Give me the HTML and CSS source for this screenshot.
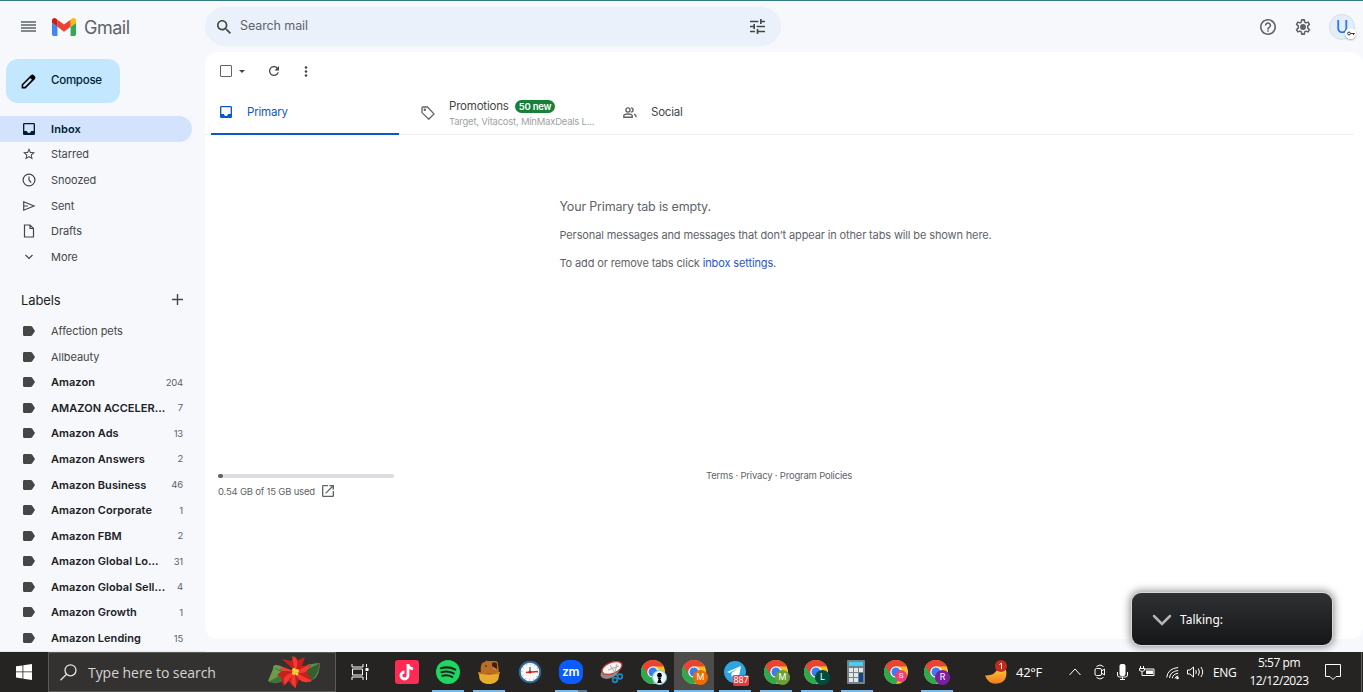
FILE: index.html
```html
<!DOCTYPE html>
<html lang="en">
<head>
  <meta charset="UTF-8">
  <meta name="viewport" content="width=device-width, initial-scale=1.0">
  <title>Inbox - Gmail</title>
  <link rel="stylesheet" href="styles.css">
</head>
<body>
  <!-- Shared icons -->
  <svg class="defs" width="0" height="0">
    <symbol id="label" viewBox="0 0 12 10"><path d="M1.5 0h6.4c.6 0 1 .2 1.3.7L12 5 9.2 9.3c-.3.5-.7.7-1.3.7H1.5C.6 10 0 9.400 0 8.500v-7C0 .6.600 0 1.500 0z"/></symbol>
    <symbol id="inbox" viewBox="3 3 18 18"><path d="M19 3H5c-1.100 0-2 .9-2 2v14c0 1.100.9 2 2 2h14c1.100 0 2-.9 2-2V5c0-1.100-.9-2-2-2zm0 12h-4c0 1.660-1.340 3-3 3s-3-1.340-3-3H5V5h14v10z"/></symbol>
    <symbol id="chrome" viewBox="0 0 48 48">
      <circle cx="24" cy="24" r="24" fill="#fbc116"/>
      <path d="M24 24 3.200 12A24 24 0 0 0 24 48l10.400-18z" fill="#2da94f"/>
      <path d="M24 24V13h21.200A24 24 0 0 0 3.200 12l10.400 18z" fill="#ea4335"/>
      <circle cx="24" cy="24" r="11.500" fill="#fff"/>
      <circle cx="24" cy="24" r="9" fill="#3a7df0"/>
    </symbol>
  </svg>

  <div class="app">
    <aside class="sidebar">
      <div class="brand">
        <svg class="menu-icon" viewBox="0 0 15 11"><path d="M0 1h15M0 4h15M0 7h15M0 10h15"/></svg>
        <svg class="gmail-logo" viewBox="52 42 88 66">
          <path fill="#4285f4" d="M58 108h14V74L52 59v43c0 3.320 2.690 6 6 6"/>
          <path fill="#34a853" d="M120 108h14c3.320 0 6-2.690 6-6V59l-20 15"/>
          <path fill="#fbbc04" d="M120 48v26l20-15v-8c0-7.420-8.470-11.650-14.400-7.200"/>
          <path fill="#ea4335" d="M72 74V48l24 18 24-18v26L96 92"/>
          <path fill="#c5221f" d="M52 51v8l20 15V48l-5.600-4.200c-5.940-4.450-14.400-.22-14.400 7.200"/>
        </svg>
        <span class="wordmark">Gmail</span>
      </div>

      <button class="compose">
        <svg viewBox="0 0 16 16"><path d="M1.500 14.500v-3L11 2l3 3-9.500 9.500z" fill="none" stroke="#000" stroke-width="1.700"/><path d="M9 3.500 11.500 1c.6-.6 1.200-.6 1.800 0L15 2.700c.6.6.6 1.200 0 1.800L12.500 7z"/></svg>
        <span>Compose</span>
      </button>

      <nav class="folders">
        <a class="row active"><svg class="ico"><use href="#inbox"/></svg><span class="name">Inbox</span></a>
        <a class="row"><svg class="ico" viewBox="2 2 20 20"><path d="M22 9.240l-7.190-.62L12 2 9.190 8.630 2 9.240l5.460 4.730L5.820 21 12 17.270 18.180 21l-1.630-7.030L22 9.240zM12 15.400l-3.760 2.270 1-4.280-3.320-2.880 4.380-.38L12 6.100l1.710 4.040 4.380.38-3.320 2.880 1 4.280L12 15.400z"/></svg><span class="name">Starred</span></a>
        <a class="row"><svg class="ico line" viewBox="0 0 12 12"><circle cx="6" cy="6" r="5.900"/><path d="M6 2.500V6l2.200 2.600"/></svg><span class="name">Snoozed</span></a>
        <a class="row"><svg class="ico line" viewBox="0 0 12 12"><path d="M.7 1.800 11 6 .7 10.200zM.7 6H5"/></svg><span class="name">Sent</span></a>
        <a class="row"><svg class="ico line" viewBox="0 0 12 12"><path d="M2.500 0H7l3.500 3.500V12h-9V0zM7 0v3.500h3.500"/></svg><span class="name">Drafts</span></a>
        <a class="row"><svg class="ico line" viewBox="0 0 12 12"><path d="m2.500 4 3.500 3.500L9.500 4"/></svg><span class="name">More</span></a>
      </nav>

      <div class="labels-head">
        <span>Labels</span>
        <svg viewBox="0 0 11 11"><path d="M5.500 0v11M0 5.500h11"/></svg>
      </div>

      <nav class="labels">
        <a class="row"><svg class="tag"><use href="#label"/></svg><span class="name">Affection pets</span></a>
        <a class="row"><svg class="tag"><use href="#label"/></svg><span class="name">Allbeauty</span></a>
        <a class="row unread"><svg class="tag"><use href="#label"/></svg><span class="name">Amazon</span><span class="count">204</span></a>
        <a class="row unread"><svg class="tag"><use href="#label"/></svg><span class="name">AMAZON ACCELER...</span><span class="count">7</span></a>
        <a class="row unread"><svg class="tag"><use href="#label"/></svg><span class="name">Amazon Ads</span><span class="count">13</span></a>
        <a class="row unread"><svg class="tag"><use href="#label"/></svg><span class="name">Amazon Answers</span><span class="count">2</span></a>
        <a class="row unread"><svg class="tag"><use href="#label"/></svg><span class="name">Amazon Business</span><span class="count">46</span></a>
        <a class="row unread"><svg class="tag"><use href="#label"/></svg><span class="name">Amazon Corporate</span><span class="count">1</span></a>
        <a class="row unread"><svg class="tag"><use href="#label"/></svg><span class="name">Amazon FBM</span><span class="count">2</span></a>
        <a class="row unread"><svg class="tag"><use href="#label"/></svg><span class="name">Amazon Global Lo...</span><span class="count">31</span></a>
        <a class="row unread"><svg class="tag"><use href="#label"/></svg><span class="name">Amazon Global Sell...</span><span class="count">4</span></a>
        <a class="row unread"><svg class="tag"><use href="#label"/></svg><span class="name">Amazon Growth</span><span class="count">1</span></a>
        <a class="row unread"><svg class="tag"><use href="#label"/></svg><span class="name">Amazon Lending</span><span class="count">15</span></a>
      </nav>
    </aside>

    <div class="content">
      <header class="topbar">
        <div class="search">
          <svg class="search-icon" viewBox="3 3 17.500 17.500"><path d="M15.500 14h-.79l-.28-.27C15.410 12.590 16 11.110 16 9.500 16 5.910 13.090 3 9.500 3S3 5.910 3 9.500 5.910 16 9.500 16c1.610 0 3.090-.59 4.230-1.570l.27.28v.79l5 4.990L20.490 19l-4.990-5zm-6 0C7.010 14 5 11.990 5 9.500S7.010 5 9.500 5 14 7.010 14 9.500 11.990 14 9.500 14z"/></svg>
          <span class="search-text">Search mail</span>
          <svg class="tune-icon" viewBox="3 3 18 18"><path d="M3 17v2h6v-2H3zM3 5v2h10V5H3zm10 16v-2h8v-2h-8v-2h-2v6h2zM7 9v2H3v2h4v2h2V9H7zm14 4v-2H11v2h10zm-6-4h2V7h4V5h-4V3h-2v6z"/></svg>
        </div>
        <div class="top-actions">
          <svg class="act" viewBox="2 2 20 20"><path d="M11 18h2v-2h-2v2zm1-16C6.480 2 2 6.480 2 12s4.480 10 10 10 10-4.480 10-10S17.520 2 12 2zm0 18c-4.410 0-8-3.590-8-8s3.590-8 8-8 8 3.590 8 8-3.590 8-8 8zm0-14c-2.210 0-4 1.790-4 4h2c0-1.100.9-2 2-2s2 .9 2 2c0 2-3 1.750-3 5h2c0-2.250 3-2.500 3-5 0-2.210-1.790-4-4-4z"/></svg>
          <svg class="act" viewBox="1.700 1.700 20.600 20.600"><path d="M10.300 2.800h3.400l.5 2.900 1.700 1 2.700-1 1.700 2.900-2.200 1.900v3l2.200 1.900-1.700 2.900-2.700-1-1.700 1-.5 2.900h-3.400l-.5-2.900-1.700-1-2.700 1-1.700-2.900 2.200-1.900v-3L3.700 8.600l1.700-2.900 2.700 1 1.700-1z" fill="none" stroke="#5f6368" stroke-width="2" stroke-linejoin="round"/><circle cx="12" cy="12" r="3.800"/></svg>
          <div class="avatar">U
            <span class="key"><svg viewBox="0 0 8 5"><circle cx="2" cy="2.500" r="1.400"/><path d="M3.500 2.500h4.200M6.500 2.500v1.600"/></svg></span>
          </div>
        </div>
      </header>

      <main class="panel">
        <div class="toolbar">
          <span class="checkbox"></span>
          <span class="caret"></span>
          <svg class="refresh" viewBox="4 4 16 16"><path d="M17.650 6.350C16.200 4.900 14.210 4 12 4c-4.420 0-7.990 3.580-7.990 8s3.570 8 7.990 8c3.730 0 6.840-2.550 7.730-6h-2.080c-.82 2.330-3.040 4-5.650 4-3.310 0-6-2.690-6-6s2.690-6 6-6c1.660 0 3.140.69 4.220 1.780L13 11h7V4l-2.350 2.350z"/></svg>
          <svg class="dots" viewBox="0 0 4 11"><circle cx="2" cy="1.500" r="1.300"/><circle cx="2" cy="5.500" r="1.300"/><circle cx="2" cy="9.500" r="1.300"/></svg>
        </div>

        <div class="tabs">
          <div class="tab primary">
            <svg class="ico"><use href="#inbox"/></svg>
            <span class="tab-name">Primary</span>
          </div>
          <div class="tab promotions">
            <svg class="promo-icon" viewBox="0 0 14 14"><path d="M1 2v4.600L7.700 13.200 13 7.900 6.400 1H2c-.6 0-1 .4-1 1z"/><circle cx="3.800" cy="3.800" r=".6"/></svg>
            <div class="promo-text">
              <div class="promo-title"><span class="tab-name">Promotions</span><span class="badge">50 new</span></div>
              <div class="senders">Target, Vitacost, MinMaxDeals L...</div>
            </div>
          </div>
          <div class="tab social">
            <svg class="social-icon" viewBox="0 0 14 11"><circle cx="5" cy="3" r="2.100"/><path d="M8 .9a2.100 2.100 0 0 1 0 4.200M.8 10.200V8.800C.8 7.600 3 7 5 7s4.200.6 4.200 1.800v1.400zM11 7.200c1.500.6 2 1.200 2 2v1"/></svg>
            <span class="tab-name">Social</span>
          </div>
        </div>

        <div class="empty">
          <p class="empty-title">Your Primary tab is empty.</p>
          <p>Personal messages and messages that don’t appear in other tabs will be shown here.</p>
          <p>To add or remove tabs click <a>inbox settings</a>.</p>
        </div>

        <footer class="footer">
          <div class="storage">
            <div class="bar"><span style="width: 3%"></span></div>
            <div class="used"><span>0.54 GB of 15 GB used</span>
              <svg viewBox="3 3 18 18"><path d="M19 19H5V5h7V3H5c-1.110 0-2 .9-2 2v14c0 1.100.89 2 2 2h14c1.100 0 2-.9 2-2v-7h-2v7zM14 3v2h3.590l-9.830 9.830 1.410 1.410L19 6.410V10h2V3h-7z"/></svg>
            </div>
          </div>
          <div class="terms">Terms · Privacy · Program Policies</div>
        </footer>
      </main>
    </div>
  </div>

  <div class="talking">
    <svg viewBox="0 0 20 12"><path d="m2 2 8 8 8-8"/></svg>
    <span>Talking:</span>
  </div>

  <div class="taskbar">
    <div class="start"><svg viewBox="0 0 16 16"><path d="M0 2.300 6.500 1.400v6.100H0zM7.300 1.300 16 0v7.500H7.300zM0 8.300h6.500v6.200L0 13.600zM7.300 8.300H16V16l-8.700-1.300z"/></svg></div>
    <div class="task-search">
      <svg class="glass" viewBox="0 0 17 17"><circle cx="10.500" cy="6.300" r="5.500"/><path d="m6.500 10.300-6 6"/></svg>
      <span class="task-text">Type here to search</span>
      <svg class="flower" viewBox="0 0 54 34">
        <path d="M20 14Q5 6 6 14l-5 12q10 4 20-4z" fill="#6b9b4d"/>
        <path d="m5 12 14 5-18 10q13 4 21-6z" fill="#467335"/>
        <path d="M32 14Q42 8 53 8q-1 16-9 17-7 0-12-6z" fill="#5f8f4c"/>
        <path d="M33 18 53 8q-3 15-9 17z" fill="#365e30"/>
        <path d="m28 16-13-12 9 2 4-5 3 4 7-3-3 9 9-1-5 6 6 10-12-3-5 10-7-7-5 5-2-9-4-2 5-4z" fill="#c71f1c"/>
        <path d="M28 17 12 15q2-6 16 2L25 1q9 3 3 16L43 9q-2 12-15 8l17 9q-12 5-17-9l1 16q-9-6-1-16l-10 13q-5-10 10-13z" fill="#f23a32"/>
        <g fill="#f5cf36"><circle cx="27" cy="15" r="2"/><circle cx="30" cy="16" r="2"/><circle cx="27" cy="18" r="2"/><circle cx="30" cy="19" r="1.500"/></g>
      </svg>
    </div>
    <div class="task-view"><svg viewBox="0 0 18 16"><path d="M1 0v3h11V0M1 16v-3h11v3M1.500 5h10v6h-10zM15.500 0v3M15.500 8v8"/><path d="M14.500 4h3v3h-3z" fill="#fff" stroke="none"/></svg></div>

    <div class="apps">
      <div class="app-item"><svg viewBox="0 0 24 24"><rect width="24" height="24" rx="3" fill="#fe2c55"/><path d="M13 4v11.500a3.500 3.500 0 1 1-3.500-3.500M13 4c0 3 2 4.500 5 4.800" fill="none" stroke="#fff" stroke-width="2.800"/></svg></div>
      <div class="app-item open"><svg viewBox="0 0 24 24"><circle cx="12" cy="12" r="12" fill="#1ed760"/><path d="M5 8.300c5-1.500 10-1 14.300 1.300M5.500 12.200c4.300-1.200 8.600-.7 12.200 1.200M6.200 15.800c3.600-.9 7-.5 10 1.100" fill="none" stroke="#1c241e" stroke-width="2.100" stroke-linecap="round"/></svg></div>
      <div class="app-item open"><svg viewBox="0 0 24 24"><path d="M4 13C3 5 5 2 8 2l1-1.500L11 1h7q3 0 3 3l1 9z" fill="#b96d27"/><path d="M15 3q4-2 5 1v5l-5-3z" fill="#382018"/><path d="m16 8 3 1.500" stroke="#e8837a"/><circle cx="9" cy="6" r=".8" fill="#2b1710"/><path d="M1 12q11 3 22 0l-1 3q0 8-8 9h-4q-8-1-8-9z" fill="#eaa92f"/><path d="M1.500 13q10.500 3 21 0" stroke="#b46c16" fill="none"/></svg></div>
      <div class="app-item"><svg viewBox="0 0 24 24"><circle cx="12" cy="12" r="10.300" fill="#f7f7f5" stroke="#2f6499" stroke-width="2"/><circle cx="12" cy="12" r="8" fill="none" stroke="#999" stroke-dasharray="1 3.190"/><path d="M12 12V7" stroke="#333"/><path d="m8 12.500 12-1" stroke="#d32a2a" stroke-width="1.300"/><circle cx="12" cy="12" r="1.500" fill="#b81f1f"/></svg></div>
      <div class="app-item open multi"><span class="zoom-app">zm</span></div>
      <div class="app-item"><svg viewBox="0 0 24 24"><ellipse cx="10" cy="12" rx="10" ry="6" transform="rotate(-25 10 12)" fill="#8b8b8b"/><ellipse cx="12" cy="8" rx="10.500" ry="5.500" transform="rotate(-22 12 8)" fill="#f4f4f4" stroke="#c83b37" stroke-width="1.300"/><path d="m10 5 7 11M17 4l-3 12M8 10l11-4" stroke="#9a9a9a" stroke-width=".8"/><g fill="none" stroke="#2089c7" stroke-width="1.700"><circle cx="15" cy="20" r="2.300"/><circle cx="20" cy="16.500" r="2.300"/></g></svg></div>
      <div class="app-item open"><svg><use href="#chrome"/></svg><span class="profile person"><svg viewBox="0 0 14 14"><circle cx="7" cy="4.500" r="2.500"/><path d="M4.500 13 6 9 4.800 7h4.400L8 9l1.500 4z"/></svg></span></div>
      <div class="app-item open current"><svg><use href="#chrome"/></svg><span class="profile orange">M</span></div>
      <div class="app-item open"><svg viewBox="0 0 24 24"><circle cx="12" cy="12" r="11" fill="#2ca5e0"/><path d="m4 12 14-6-2.500 13-5-4-2 2v-4l7-5-9 5z" fill="#fff"/></svg><span class="unread-count">887</span></div>
      <div class="app-item open"><svg><use href="#chrome"/></svg><span class="profile green">M</span></div>
      <div class="app-item narrow open"><svg><use href="#chrome"/></svg><span class="profile teal">L</span></div>
      <div class="app-item narrow open"><svg viewBox="0 0 24 24"><rect x="3" width="18" height="24" rx="1" fill="#77818c"/><rect x="5" y="2" width="14" height="4" fill="#43d0f5"/><path d="M5 8h4v4H5zm5 0h4v4h-4zm5 0h4v4h-4zM5 13h4v4H5zm5 0h4v4h-4zM5 18h4v4H5zm5 0h4v4h-4z" fill="#e3e7ea"/><path d="M15 13h4v9h-4z" fill="#0c4a8c"/></svg></div>
      <div class="app-item narrow"><svg><use href="#chrome"/></svg><span class="profile pink">S</span></div>
      <div class="app-item narrow open"><svg><use href="#chrome"/></svg><span class="profile purple">R</span></div>
    </div>

    <div class="weather">
      <svg viewBox="0 0 24 24"><defs><linearGradient id="moon" x2="0" y2="1"><stop stop-color="#ffc83a"/><stop offset="1" stop-color="#f07c1c"/></linearGradient></defs><path d="M1 15.500Q11 16 14 8l8 2q2 10-6 13-11 3-15-7.500z" fill="url(#moon)"/><circle cx="17" cy="6" r="6" fill="#c42b1c"/><path d="m15.500 4.500 2-1.300V9" fill="none" stroke="#fff"/></svg>
      <span>42°F</span>
    </div>
    <div class="tray">
      <svg class="chevron" width="12" viewBox="0 0 12 16"><path d="m.5 11 5.500-6 5.500 6"/></svg>
      <svg width="12" viewBox="0 0 12 16"><rect x="1" y="4.500" width="6.500" height="7" rx="1.500"/><path d="m7.500 7 3-2v6l-3-2M2.500 2.500q3.500-3 7 0M2.500 13.500q3.500 3 7 0"/></svg>
      <svg width="11" viewBox="0 0 11 16"><rect x="2.500" y="0" width="6" height="12" rx="2" fill="#fff" stroke="none"/><path d="M.5 8v3q0 2 2 2h6q2 0 2-2V8M5.500 13v2.500M3 15.500h5"/></svg>
      <svg width="16" viewBox="0 0 16 16"><path d="M5 5h10v6.500H6M1.500 2v2M4.500 2v2M.5 4.500h5v2q-2.500 2-5 0zM3 8v3.500h3"/><path d="M7 6.500h7V10H7z" fill="#fff" stroke="none"/></svg>
      <svg width="13" viewBox="0 0 13 16"><path d="M.7 13.500q1-9 11.500-10M3.500 14q.6-6.700 8.700-7.500M6.200 14.300q.8-4.500 6-5M9 14.500q.3-2 3.200-2.500"/><circle cx="11.500" cy="14" r="1.300" fill="#fff" stroke="none"/></svg>
      <svg class="volume" width="17" viewBox="0 0 17 16"><path d="M.5 6h2.500l3.500-3v10L3 10H.5zM8.700 6q1.300 2 0 4M11.300 4.500q2.300 3.500 0 7M13.900 3q3.600 5 0 10"/></svg>
      <span class="lang">ENG</span>
    </div>
    <div class="clock"><span>5:57 pm</span><span>12/12/2023</span></div>
    <div class="notify"><svg viewBox="0 0 16 16"><path d="M.5.500h15v12H11l-3 3-3-3H.5z"/></svg></div>
  </div>
</body>
</html>
```
FILE: styles.css
```css
* {
  box-sizing: border-box;
}

body {
  margin: 0;
  height: 692px;
  display: flex;
  flex-direction: column;
  overflow: hidden;
  background: #f6f8fc;
  color: #444746;
  font-family: Inter, Roboto, sans-serif;
  font-size: 11px;
}

svg {
  display: block;
  flex: none;
}

.defs {
  position: absolute;
}

.app {
  height: 652px;
  flex: none;
  display: flex;
  border-top: 1px solid #357b80;
}

/* Sidebar */
.sidebar {
  width: 205px;
  flex: none;
  overflow: hidden;
  border-bottom: 1px solid #e6e8ec;
}

.brand {
  height: 58px;
  display: flex;
  padding: 17px 0 0 21px;
}

.menu-icon {
  width: 15px;
  height: 11px;
  margin-top: 3px;
  stroke: #5f6368;
  stroke-width: 1.5;
}

.gmail-logo {
  width: 24px;
  height: 18px;
  margin-left: 16px;
}

.wordmark {
  margin-left: 8px;
  font-size: 18px;
  line-height: 19px;
  letter-spacing: -0.5px;
  color: #5f6368;
}

.compose {
  width: 114px;
  height: 44px;
  margin-left: 6px;
  padding: 0 0 0 15px;
  display: flex;
  align-items: center;
  border: none;
  border-radius: 12px;
  background: #c2e7ff;
  color: #001d35;
  font-family: inherit;
  font-size: 11.5px;
  font-weight: 500;
  letter-spacing: -0.25px;
}

.compose svg {
  width: 15px;
  height: 15px;
  margin-right: 15px;
}

.compose span {
  padding-bottom: 2px;
}

.folders {
  margin-top: 13px;
}

.row {
  height: 25.6px;
  width: 192px;
  padding: 0 9px 0 23px;
  display: flex;
  align-items: center;
  border-radius: 0 13px 13px 0;
}

.row.active {
  background: #d3e3fd;
  color: #001d35;
  font-weight: 600;
}

.ico {
  width: 12px;
  height: 12px;
  fill: currentColor;
}

.line {
  fill: none;
  stroke: #444746;
  stroke-width: 1.2;
  overflow: visible;
}

.tag {
  width: 12px;
  height: 10px;
  fill: #444746;
}

.name {
  flex: 1;
  margin-left: 16px;
  white-space: nowrap;
  letter-spacing: -0.05px;
}

.active .name {
  letter-spacing: 0.1px;
}

.unread .name {
  font-weight: 600;
  letter-spacing: 0.05px;
  color: #202124;
}

.count {
  font-size: 9.5px;
  letter-spacing: -0.2px;
  color: #5f6368;
}

.labels-head {
  width: 162px;
  height: 48.6px;
  margin-left: 21px;
  padding-top: 12px;
  display: flex;
  justify-content: space-between;
  align-items: center;
  color: #1f1f1f;
  font-size: 13px;
  letter-spacing: -0.1px;
}

.labels-head svg {
  width: 11px;
  height: 11px;
  stroke: #444746;
  stroke-width: 1.4;
}

/* Top bar */
.content {
  flex: 1;
  display: flex;
  flex-direction: column;
}

.topbar {
  height: 51px;
  display: flex;
  justify-content: space-between;
  padding-top: 6px;
}

.search {
  width: 576px;
  height: 39px;
  padding: 0 16px 0 12px;
  display: flex;
  align-items: center;
  border-radius: 20px;
  background: #eaf1fb;
}

.search-icon {
  width: 14px;
  height: 14px;
  fill: #444746;
}

.search-text {
  flex: 1;
  margin-left: 9px;
  padding-bottom: 2px;
  font-size: 12.5px;
  letter-spacing: -0.1px;
  color: #5f6368;
}

.tune-icon {
  width: 15px;
  height: 15px;
  fill: #444746;
}

.top-actions {
  display: flex;
  align-items: center;
  height: 39px;
  gap: 19px;
  padding-right: 8px;
}

.act {
  width: 16px;
  height: 16px;
  fill: #5f6368;
}

.avatar {
  position: relative;
  width: 26px;
  height: 26px;
  margin-left: -1px;
  border: 1px solid #d2def2;
  border-radius: 50%;
  background: #e4edfb;
  color: #1a73e8;
  font-size: 17px;
  line-height: 24px;
  text-align: center;
}

.key {
  position: absolute;
  right: -2px;
  bottom: 0;
  width: 11px;
  height: 11px;
  padding: 3px 1.5px;
  border-radius: 50%;
  background: #fff;
  box-shadow: 0 1px 2px rgba(0, 0, 0, 0.3);
}

.key svg {
  width: 8px;
  height: 5px;
  fill: none;
  stroke: #333;
}

/* Mail panel */
.panel {
  height: 587px;
  border-radius: 13px;
  background: #fff;
}

.toolbar {
  height: 38px;
  padding-left: 15px;
  display: flex;
  align-items: center;
}

.checkbox {
  width: 12px;
  height: 12px;
  border: 1.5px solid #5f6368;
  border-radius: 1px;
}

.caret {
  margin-left: 7px;
  border: 3px solid transparent;
  border-top: 3px solid #444746;
  border-bottom: none;
}

.refresh {
  width: 10px;
  height: 10px;
  margin-left: 24px;
  fill: #444746;
}

.dots {
  width: 4px;
  height: 11px;
  margin-left: 25px;
  fill: #444746;
}

.tabs {
  height: 45px;
  margin-right: 9px;
  padding-left: 6px;
  display: flex;
  border-bottom: 1px solid #eceff1;
}

.tab {
  height: 45px;
  display: flex;
  align-items: center;
}

.tab-name {
  font-size: 11.5px;
  letter-spacing: -0.2px;
  color: #444746;
}

.primary {
  width: 188px;
  padding-left: 9px;
  gap: 15px;
  color: #0b57d0;
  border-bottom: 2px solid #0b57d0;
}

.primary .tab-name {
  color: #0b57d0;
}

.promotions {
  width: 203px;
  padding-left: 22px;
}

.promo-icon {
  width: 14px;
  height: 14px;
  margin-right: 14px;
  fill: none;
  stroke: #5f6368;
  stroke-width: 1.3;
}

.promo-text {
  padding-top: 2px;
  white-space: nowrap;
  line-height: 15px;
}

.promo-title {
  display: flex;
  align-items: center;
}

.badge {
  height: 13px;
  margin-left: 6px;
  padding: 0 4px;
  border-radius: 7px;
  background: #188038;
  color: #fff;
  font-size: 9.5px;
  font-weight: 600;
  letter-spacing: -0.2px;
  line-height: 13px;
}

.senders {
  font-size: 9.5px;
  letter-spacing: -0.23px;
  color: #a0a3a5;
}

.social {
  padding-left: 21px;
}

.social .tab-name {
  padding-bottom: 1px;
}

.social-icon {
  width: 14px;
  height: 11px;
  margin-right: 14px;
  fill: none;
  stroke: #5f6368;
  stroke-width: 1.4;
}

.empty {
  height: 334px;
  padding: 63px 0 0 354.5px;
  color: #5f6368;
}

.empty p {
  margin: 0 0 12px;
  line-height: 16px;
  letter-spacing: -0.13px;
}

.empty .empty-title {
  line-height: 17px;
  font-size: 12.5px;
  letter-spacing: -0.17px;
}

.empty a {
  color: #2a56c6;
}

.footer {
  padding-left: 13px;
  display: flex;
  font-size: 9.5px;
  letter-spacing: -0.2px;
  color: #5f6368;
}

.storage {
  width: 176px;
  padding-top: 5px;
}

.bar {
  height: 4px;
  border-radius: 2px;
  background: #dadce0;
}

.bar span {
  display: block;
  height: 4px;
  border-radius: 2px;
  background: #5f6368;
}

.used {
  display: flex;
  align-items: center;
  gap: 7px;
  padding-top: 7px;
}

.used svg {
  width: 12px;
  height: 12px;
  fill: #5f6368;
}

.terms {
  margin-left: 312px;
  line-height: 14px;
}

/* Floating call box */
.talking {
  position: absolute;
  left: 1132px;
  top: 593px;
  width: 200px;
  height: 52px;
  padding-left: 20px;
  display: flex;
  align-items: center;
  gap: 8px;
  border-radius: 9px;
  background: linear-gradient(#303133, #151617);
  box-shadow: 0 0 0 1px #d5d6d8, 0 0 9px 2px rgba(0, 0, 0, 0.45);
  color: #fff;
  font-family: "Noto Sans", sans-serif;
  font-size: 12px;
}

.talking svg {
  width: 20px;
  height: 12px;
  margin-top: 2px;
  fill: none;
  stroke: #b5b5b6;
  stroke-width: 2.5;
  stroke-linecap: round;
}

/* Taskbar */
.taskbar {
  position: relative;
  height: 40px;
  flex: none;
  display: flex;
  background: #262422;
  color: #fff;
  font-family: "Open Sans", "Noto Sans", sans-serif;
}

.start {
  width: 48px;
  display: flex;
  align-items: center;
  justify-content: center;
}

.start svg {
  width: 16px;
  height: 16px;
  fill: #fff;
}

.task-search {
  width: 288px;
  padding-left: 11px;
  display: flex;
  align-items: center;
  border: 1px solid #5b5a59;
  background: #333231;
}

.glass {
  width: 17px;
  height: 17px;
  fill: none;
  stroke: #e5e5e5;
  stroke-width: 1.3;
}

.task-text {
  width: 179px;
  margin-left: 11px;
  font-size: 14px;
  letter-spacing: -0.05px;
  color: #d4d4d4;
}

.flower {
  width: 54px;
  height: 34px;
}

.task-view {
  width: 51px;
  padding: 12px 0 0 15px;
}

.task-view svg {
  width: 18px;
  height: 16px;
  fill: none;
  stroke: #fff;
}

.apps {
  display: flex;
}

.app-item {
  position: relative;
  width: 41px;
  padding-right: 1px;
  display: flex;
  align-items: center;
  justify-content: center;
}

.app-item.narrow {
  width: 40px;
  padding-right: 2px;
}

.app-item > svg {
  width: 24px;
  height: 24px;
}

.app-item.open::after {
  content: "";
  position: absolute;
  left: 4px;
  bottom: 0;
  width: 32px;
  height: 2px;
  background: #76b9ed;
}

.app-item.multi::after {
  background: linear-gradient(90deg, #76b9ed 23px, #53799a 23px);
}

.app-item.current {
  background: linear-gradient(90deg, #4e4c4b 40px, transparent 40px);
}

.app-item.current::after {
  left: 0;
  width: 40px;
}

.zoom-app {
  width: 24px;
  height: 24px;
  border-radius: 9px;
  background: #0b5cff;
  font: bold 13px/22px Lato, sans-serif;
  text-align: center;
}

.profile {
  position: absolute;
  left: 19px;
  top: 18px;
  width: 15px;
  height: 15px;
  border-radius: 50%;
  font: 9px/15px Roboto, sans-serif;
  text-align: center;
}

.narrow .profile {
  left: 18px;
}

.orange { background: #ef6c00; }
.green { background: #689f38; }
.teal { background: #004d40; }
.purple { background: #7b1fa2; }
.person { background: #e8f8fb; border: 1px solid #73c9d6; }

.pink {
  width: 12px;
  height: 12px;
  background: #ec407a;
  font-size: 8px;
  line-height: 12px;
}

.unread-count {
  position: absolute;
  left: 18px;
  top: 23px;
  width: 16px;
  height: 11px;
  border-radius: 2px;
  background: #e8373d;
  font: 9px/11px Roboto, sans-serif;
  text-align: center;
}

.weather {
  width: 85px;
  margin-left: 27px;
  display: flex;
  align-items: center;
  gap: 8px;
  font-size: 13px;
  letter-spacing: -0.3px;
}

.weather svg {
  width: 24px;
  height: 24px;
}

.tray {
  width: 171px;
  display: flex;
  align-items: center;
  gap: 11px;
}

.tray svg {
  height: 16px;
  fill: none;
  stroke: #fff;
}

.tray .chevron {
  margin-right: 2px;
}

.tray .volume {
  margin-left: -3px;
}

.lang {
  margin-left: -2px;
  font-size: 12px;
  letter-spacing: -0.4px;
}

.clock {
  width: 78px;
  display: flex;
  flex-direction: column;
  align-items: center;
  padding-top: 2px;
  font-size: 12px;
  line-height: 18px;
  letter-spacing: -0.45px;
}

.notify {
  flex: 1;
  margin-right: 1px;
  padding-left: 7px;
  display: flex;
  align-items: center;
  border-right: 1px solid #5f5e5d;
}

.notify svg {
  width: 16px;
  height: 16px;
  fill: none;
  stroke: #fff;
}
```
